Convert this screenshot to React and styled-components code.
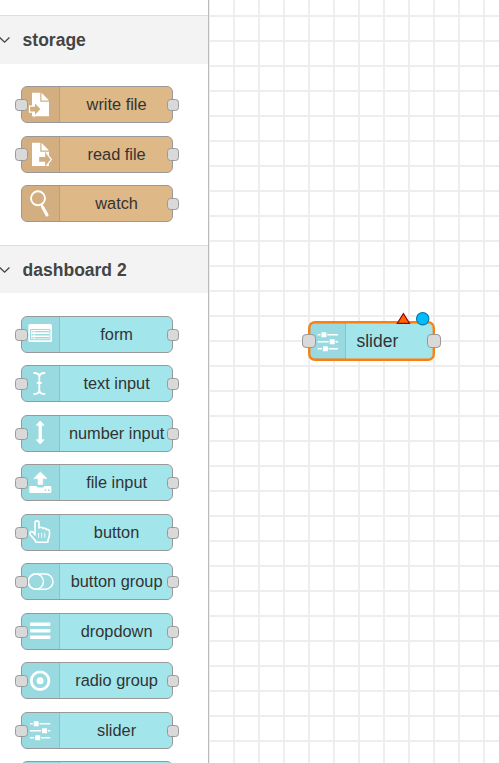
import React from "react";
import styled, { createGlobalStyle } from "styled-components";

const TAN = "#deb887";
const TAN_DARK = "#d3af80";
const TEAL = "#a2e6ec";
const TEAL_DARK = "#9adae0";

const GlobalStyle = createGlobalStyle`
  body {
    margin: 0;
    overflow: hidden;
    font-family: "Liberation Sans", Arial, sans-serif;
  }
`;

const Editor = styled.div`
  display: flex;
  width: 499px;
  height: 763px;
  overflow: hidden;
  background: #fff;
`;

const Palette = styled.aside`
  box-sizing: border-box;
  flex: none;
  width: 209px;
  height: 763px;
  padding-top: 15px;
  overflow: hidden;
  border-right: 1px solid #bbb;
`;

const CategoryHeader = styled.header`
  box-sizing: border-box;
  display: flex;
  align-items: center;
  height: ${(p) => p.$height}px;
  border-top: 1px solid #ddd;
  background: #f3f3f3;
  color: #444;
  font-size: 17.5px;
  font-weight: bold;
  line-height: 20px;
  white-space: nowrap;
`;

const CategoryTitle = styled.span`
  padding-top: ${(p) => p.$shift}px;
`;

const Chevron = styled.svg`
  flex: none;
  width: 12px;
  height: 10px;
  margin-right: 10.6px;
`;

const NodeList = styled.div`
  box-sizing: border-box;
  display: flex;
  flex-direction: column;
  gap: 12.5px;
  height: ${(p) => p.$height}px;
  padding: ${(p) => p.$top}px 0 0 21px;
`;

const NodeBox = styled.div`
  position: relative;
  box-sizing: border-box;
  display: flex;
  flex: none;
  width: 152px;
  height: 37px;
  border: 1px solid #999;
  border-radius: 6px;
  background: ${(p) => p.$color};
`;

const IconArea = styled.div`
  box-sizing: border-box;
  flex: none;
  width: 38px;
  border-right: 1px solid rgba(0, 0, 0, 0.1);
  border-radius: 5px 0 0 5px;
  background: rgba(0, 0, 0, 0.05);
`;

const IconSvg = styled.svg`
  display: block;
  width: 38px;
  height: 35px;
`;

const Label = styled.span`
  flex: 1;
  padding-left: 1.2px;
  color: #333;
  font-size: 16.35px;
  line-height: 35px;
  text-align: center;
  white-space: nowrap;
`;

const Port = styled.i`
  position: absolute;
  top: 11.8px;
  ${(p) => p.$side}: -7px;
  box-sizing: border-box;
  width: ${(p) => (p.$side === "left" ? 13 : 12)}px;
  height: 12.4px;
  border: 1px solid #999;
  border-radius: 3.5px;
  background: #d9d9d9;
`;

const Workspace = styled.main`
  position: relative;
  flex: 1;
  background-image: linear-gradient(to right, #eee 2px, transparent 2px),
    linear-gradient(to bottom, #eee 2px, transparent 2px);
  background-size: 25px 25px;
  background-position: -1px 0, 0 15px;
`;

const CanvasNode = styled.div`
  position: absolute;
  left: 99px;
  top: 321px;
  box-sizing: border-box;
  display: flex;
  width: 127px;
  height: 40px;
  border: 2px solid #ff7f0e;
  border-radius: 7px;
  background: ${TEAL};
  box-shadow: inset 0 0 0 0.4px #ff7f0e;
`;

const CanvasIconArea = styled(IconArea)`
  width: 36px;
  border-radius: 4px 0 0 4px;
`;

const CanvasIconSvg = styled(IconSvg)`
  width: 35px;
  height: 36px;
`;

const CanvasLabel = styled.span`
  padding-left: 10.4px;
  color: #333;
  font-size: 17.5px;
  line-height: 36px;
`;

const CanvasPort = styled(Port)`
  top: 11px;
  ${(p) => p.$side}: -8px;
  width: 14px;
  height: 14px;
  border-radius: 4px;
`;

const StatusMarks = styled.svg`
  position: absolute;
  left: 184px;
  top: 309px;
  width: 40px;
  height: 20px;
`;

const SliderGlyph = () => (
  <g fill="#fff">
    <path d="M9 11h2.8v1.4H9zM18.6 11h10.7v1.4H18.6zM9 18h11v1.4H9zM26.8 18h2.5v1.4h-2.5zM9 25h4.2v1.4H9zM20 25h9.3v1.4H20z" />
    <rect x="12.7" y="9.2" width="5" height="5" rx="0.5" />
    <rect x="21" y="16.2" width="5" height="5" rx="0.5" />
    <rect x="14.2" y="23.2" width="5" height="5" rx="0.5" />
  </g>
);

const glyphs = {
  write: (
    <>
      <path fill="#fff" d="M11 6.7H19.3V15.7H28V30.3H11z" />
      <path fill="#fff" d="M20.5 6.7L28 14.4H20.5z" />
      <path fill={TAN_DARK} stroke="#fff" strokeWidth="1.2" d="M8.5 20.1H13.4V15.9L20.2 23.1L13.4 30.2V26.1H8.5z" />
    </>
  ),
  read: (
    <>
      <path fill="#fff" d="M11 6.7H19.3V15.7H28V30.1H11z" />
      <path fill="#fff" d="M20.5 6.7L28 14.4H20.5z" />
      <path fill={TAN_DARK} d="M18.2 20.9H24.2V16.2L25.5 16.6L30.6 23.4L25.5 30.2H24.2V25.8H18.2z" />
      <path fill="none" stroke="#fff" strokeWidth="1.2" d="M25.3 16.9L30.4 23.4L25.3 29.9" />
    </>
  ),
  watch: (
    <g fill="none" stroke="#fff" strokeLinecap="round">
      <circle cx="17" cy="13.3" r="7" strokeWidth="1.9" />
      <path strokeWidth="3.1" d="M21.7 22.2L26 30" />
      <path strokeWidth="1.8" d="M20.2 19.6L22 23" />
    </g>
  ),
  form: (
    <>
      <rect x="7.4" y="8" width="23.5" height="18" rx="1.6" fill="#fff" />
      <rect x="9" y="13" width="20.4" height="11.2" rx="0.8" fill={TEAL_DARK} />
      <rect x="10" y="14" width="18.4" height="9.2" fill="#fff" />
      <path
        fill="none"
        stroke={TEAL_DARK}
        strokeWidth="1.4"
        d="M10.5 15.6H12.6M13.6 15.6H28M10.5 18.7H12.6M13.6 18.7H28M10.5 21.8H12.6M13.6 21.8H28"
      />
    </>
  ),
  text: (
    <path
      fill="none"
      stroke="#fff"
      strokeWidth="1.8"
      strokeLinecap="round"
      d="M13.2 8C16.5 8 18.3 9.3 18.3 12V25C18.3 27.7 16.5 29 13.2 29M23.4 8C20.1 8 18.3 9.3 18.3 12M18.3 25C18.3 27.7 20.1 29 23.4 29M16.5 17.9H20.1"
    />
  ),
  number: (
    <path
      fill="#fff"
      stroke="#fff"
      strokeWidth="0.9"
      strokeLinejoin="round"
      d="M19.2 6L23 10.2H20.4V24.8H23L19.2 29L15.4 24.8H18V10.2H15.4z"
    />
  ),
  file: (
    <>
      <path
        fill="#fff"
        stroke="#fff"
        strokeWidth="0.6"
        strokeLinejoin="round"
        d="M19.3 8L26 14.6H21.7V20.4H17V14.6H12.7z"
      />
      <path
        fill="#fff"
        d="M9.2 22H15.2Q16.2 23.5 17.6 23.5H21Q22.4 23.5 23.4 22H29.4Q30.3 22 30.3 23V28Q30.3 29 29.4 29H9.2Q8.3 29 8.3 28V23Q8.3 22 9.2 22z"
      />
      <circle cx="24.4" cy="26.1" r="0.9" fill={TEAL_DARK} />
      <circle cx="27.7" cy="26.1" r="0.9" fill={TEAL_DARK} />
    </>
  ),
  button: (
    <g fill="none" stroke="#fff" strokeLinecap="round" strokeLinejoin="round">
      <path
        strokeWidth="1.6"
        d="M14 20.8V8.8C14 6.2 18 6.2 18 8.8V13.9C19.4 12.7 21.4 13.2 21.7 14.6C23.1 13.7 25 14.2 25.3 15.7C27 14.9 28.5 15.9 28.5 17.6V20.4C28.5 23 26.8 24.6 26.8 28.2H14.9C14.5 25.6 11.3 23.6 9.3 20.8C7.8 18.2 10.7 16.4 12.4 18.6z"
      />
      <path strokeWidth="0.9" d="M17.6 19.2V23.4M20.6 19.2V23.4M23.7 19.2V23.4" />
    </g>
  ),
  group: (
    <g fill="none" stroke="#fff" strokeWidth="1.5">
      <rect x="7.2" y="11" width="24.8" height="15.3" rx="7.65" />
      <circle cx="14.8" cy="18.65" r="7.65" />
    </g>
  ),
  dropdown: (
    <g fill="#fff">
      <rect x="9" y="9.5" width="20.4" height="3.4" rx="0.7" />
      <rect x="9" y="16" width="20.4" height="3.4" rx="0.7" />
      <rect x="9" y="22.6" width="20.4" height="3.4" rx="0.7" />
    </g>
  ),
  radio: (
    <>
      <circle cx="19.1" cy="18.7" r="8.8" fill="none" stroke="#fff" strokeWidth="2.8" />
      <circle cx="19.1" cy="18.7" r="3.5" fill="#fff" />
    </>
  ),
  slider: <SliderGlyph />,
};

const PaletteNode = ({ label, icon, color, input = true }) => (
  <NodeBox $color={color}>
    <IconArea>
      <IconSvg viewBox="1 1 38 35">{glyphs[icon]}</IconSvg>
    </IconArea>
    <Label>{label}</Label>
    {input && <Port $side="left" />}
    <Port $side="right" />
  </NodeBox>
);

const Category = ({ title, headerHeight, titleShift = 0, listHeight, top, children }) => (
  <section>
    <CategoryHeader $height={headerHeight}>
      <Chevron viewBox="0 0 12 10">
        <path d="M-0.3 2.5L4.6 7.2L9.4 2.5" fill="none" stroke="#444" strokeWidth="1.3" />
      </Chevron>
      <CategoryTitle $shift={titleShift}>{title}</CategoryTitle>
    </CategoryHeader>
    <NodeList $height={listHeight} $top={top}>
      {children}
    </NodeList>
  </section>
);

const dashboardNodes = [
  ["form", "form"],
  ["text input", "text"],
  ["number input", "number"],
  ["file input", "file"],
  ["button", "button"],
  ["button group", "group"],
  ["dropdown", "dropdown"],
  ["radio group", "radio"],
  ["slider", "slider"],
];

export default function App() {
  return (
    <>
      <GlobalStyle />
      <Editor>
        <Palette>
          <Category title="storage" headerHeight={49} listHeight={181} top={22.1}>
            <PaletteNode label="write file" icon="write" color={TAN} />
            <PaletteNode label="read file" icon="read" color={TAN} />
            <PaletteNode label="watch" icon="watch" color={TAN} input={false} />
          </Category>
          <Category title="dashboard 2" headerHeight={48} titleShift={1} listHeight={520} top={22.75}>
            {dashboardNodes.map(([label, icon]) => (
              <PaletteNode key={label} label={label} icon={icon} color={TEAL} />
            ))}
            <NodeBox $color={TEAL}>
              <IconArea />
            </NodeBox>
          </Category>
        </Palette>
        <Workspace>
          <CanvasNode>
            <CanvasIconArea>
              <CanvasIconSvg viewBox="1.3 0 35 36">
                <SliderGlyph />
              </CanvasIconSvg>
            </CanvasIconArea>
            <CanvasLabel>slider</CanvasLabel>
            <CanvasPort $side="left" />
            <CanvasPort $side="right" />
          </CanvasNode>
          <StatusMarks viewBox="0 0 40 20">
            <path d="M10.4 4.6L16.6 14.4H4.2z" fill="#f60" stroke="#900" strokeWidth="1.1" />
            <circle cx="29.7" cy="9.7" r="6.2" fill="#00bcff" stroke="#0078a8" strokeWidth="1.1" />
          </StatusMarks>
        </Workspace>
      </Editor>
    </>
  );
}
